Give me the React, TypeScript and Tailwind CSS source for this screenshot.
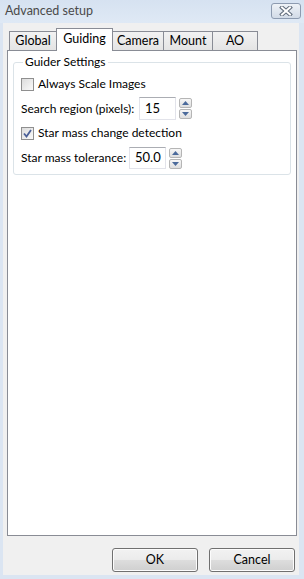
import React from 'react';

const TABS = [
  { label: 'Global', w: 'w-[48px]' },
  { label: 'Guiding', w: 'w-[57px]' },
  { label: 'Camera', w: 'w-[52px]' },
  { label: 'Mount', w: 'w-[50px]' },
  { label: 'AO', w: 'w-[46px]' },
];

function CloseGlyph() {
  return (
    <svg width="14" height="10" viewBox="0 0 14 10">
      <path d="M3 1.5 L11 8.5 M11 1.5 L3 8.5" stroke="#5f6b7a" strokeWidth="4" strokeLinecap="square" />
      <path d="M3 1.5 L11 8.5 M11 1.5 L3 8.5" stroke="#ffffff" strokeWidth="2" strokeLinecap="square" />
    </svg>
  );
}

function Checkbox({ checked }: { checked: boolean }) {
  return (
    <span className="w-[13px] h-[13px] border border-[#8f8f8f] bg-[linear-gradient(135deg,#dcdcdc,#fafafa)] flex items-center justify-center shrink-0">
      {checked && (
        <svg width="9" height="9" viewBox="0 0 9 9">
          <path d="M1 4.5 L3.5 7.5 L8 1" fill="none" stroke="#4a5f97" strokeWidth="1.8" />
        </svg>
      )}
    </span>
  );
}

function Spin() {
  const btn = 'w-[13px] h-[10px] border border-[#b5b5b5] rounded-[2px] bg-[linear-gradient(#f7f7f7,#dedede)] flex items-center justify-center';
  return (
    <div className="flex flex-col gap-[1px] ml-[3px] mt-[1px]">
      <span className={btn}>
        <svg width="7" height="4" viewBox="0 0 7 4"><path d="M0 4 L3.5 0 L7 4 Z" fill="#4b6a9b" /></svg>
      </span>
      <span className={btn}>
        <svg width="7" height="4" viewBox="0 0 7 4"><path d="M0 0 L3.5 4 L7 0 Z" fill="#4b6a9b" /></svg>
      </span>
    </div>
  );
}

function NumberField({ value, w, h }: { value: string; w: string; h: string }) {
  return (
    <div className="flex items-start">
      <div className={`${w} ${h} border border-[#e2e3ea] border-t-[#abadb3] bg-white flex items-center pl-[5px] text-[13px] text-black`}>
        {value}
      </div>
      <Spin />
    </div>
  );
}

function DialogButton({ label }: { label: string }) {
  return (
    <button className="w-[86px] h-[24px] rounded-[3px] border border-[#707070] bg-[linear-gradient(#f2f2f2_0%,#ebebeb_50%,#dddddd_51%,#cfcfcf_100%)] text-[12.5px] text-black shadow-[inset_0_0_0_1px_#fcfcfc]">
      {label}
    </button>
  );
}

export default function App() {
  return (
    <div className="w-[304px] h-[579px] bg-[#dbe5f2] flex flex-col font-['Lato',sans-serif] text-[12px] text-black overflow-hidden whitespace-nowrap">
      {/* title bar */}
      <div className="h-[23px] flex items-start justify-between bg-[linear-gradient(#d6e2f1,#dfe9f5)] shrink-0">
        <span className="pl-[5px] pt-[3px] leading-[16px] text-[12.5px] text-[#4a4a4a]">Advanced setup</span>
        <span className="mt-[3px] mr-[3px] w-[30px] h-[16px] rounded-[3px] border border-[#8d9bb0] bg-[linear-gradient(#eef2f7,#d2dbe7)] flex items-center justify-center">
          <CloseGlyph />
        </span>
      </div>

      {/* client area */}
      <div className="flex-1 ml-[3px] mr-[5px] mb-[4px] bg-[#f0f0f0] flex flex-col">
        {/* tabs */}
        <div className="h-[27px] flex items-end pl-[6px]">
          {TABS.map((t, i) => {
            const sel = t.label === 'Guiding';
            return (
              <div
                key={t.label}
                className={`${t.w} ${i > 0 ? '-ml-px' : ''} border border-b-0 border-[#898c95] flex justify-center ${
                  sel
                    ? 'h-[23px] bg-white relative z-10 -mb-px pt-[2px]'
                    : 'h-[19px] bg-[linear-gradient(#f2f2f2,#e4e4e4)] pt-[1px]'
                }`}
              >
                <span className="leading-[16px] text-[12.5px]">{t.label}</span>
              </div>
            );
          })}
        </div>

        {/* panel */}
        <div className="ml-[4px] w-[290px] h-[486px] border border-[#898c95] bg-white px-[5px] pt-[4px]">
          <fieldset className="border border-[#dbe3e8] rounded-[3px] px-[7px] pb-[5px]">
            <legend className="ml-[2px] px-[2px] leading-[14px] text-[12px]">Guider Settings</legend>
            <div className="flex items-center gap-[4px] h-[16px] mt-[7px]">
              <Checkbox checked={false} />
              <span>Always Scale Images</span>
            </div>
            <div className="flex items-start mt-[5px]">
              <span className="w-[118px] h-[23px] flex items-center">Search region (pixels):</span>
              <NumberField value="15" w="w-[37px]" h="h-[23px]" />
            </div>
            <div className="flex items-center gap-[4px] h-[16px] mt-[5px]">
              <Checkbox checked />
              <span>Star mass change detection</span>
            </div>
            <div className="flex items-start mt-[6px]">
              <span className="w-[108px] h-[22px] flex items-center">Star mass tolerance:</span>
              <NumberField value="50.0" w="w-[37px]" h="h-[22px]" />
            </div>
          </fieldset>
        </div>

        {/* buttons */}
        <div className="flex justify-end gap-[11px] pr-[4px] mt-[12px]">
          <DialogButton label="OK" />
          <DialogButton label="Cancel" />
        </div>
      </div>
    </div>
  );
}
